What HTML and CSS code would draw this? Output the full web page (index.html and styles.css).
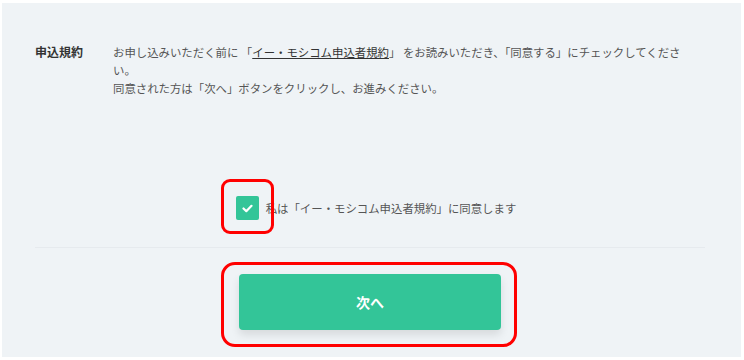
FILE: index.html
```html
<!DOCTYPE html>
<html lang="ja">
<head>
    <meta charset="UTF-8">
    <meta name="viewport" content="width=device-width, initial-scale=1.0">
    <title>申込規約</title>
    <link rel="stylesheet" href="styles.css">
</head>
<body>

    <div class="panel">
        <!-- 規約の説明 -->
        <div class="terms">
            <div class="terms-label">申込規約</div>
            <div class="terms-text">
                <p>お申し込みいただく前に 「<a href="#">イー・モシコム申込者規約</a>」 をお読みいただき、「同意する」にチェックしてください。</p>
                <p>同意された方は「次へ」ボタンをクリックし、お進みください。</p>
            </div>
        </div>

        <!-- 同意チェック -->
        <div class="agree">
            <label class="agree-label">
                <span class="check">
                    <svg width="11" height="9" viewBox="0 0 11 9">
                        <polyline points="1.5,4.5 4.3,7.2 9.5,1.8" fill="none" stroke="#fff" stroke-width="2.2" stroke-linecap="round" stroke-linejoin="round"/>
                    </svg>
                    <span class="mark mark-check"></span>
                </span>
                <span class="agree-text">私は「イー・モシコム申込者規約」に同意します</span>
            </label>
        </div>

        <footer>
            <button class="next-btn">次へ<span class="mark mark-btn"></span></button>
        </footer>
    </div>

</body>
</html>
```

FILE: styles.css
```css
/* スタイル設定 */
body {
    margin: 0;
    padding: 0;
    background-color: #fff;
    font-family: "Noto Sans CJK JP", "Noto Sans", sans-serif;
    color: #555;
}
.panel {
    margin: 3px 3px 0 2px;
    height: 354px;
    padding: 40px 36px 0 33px;
    box-sizing: border-box;
    background-color: #eff3f6;
}
.terms {
    display: flex;
}
.terms-label {
    width: 78px;
    flex-shrink: 0;
    font-size: 12px;
    line-height: 18px;
    font-weight: bold;
    color: #333;
}
.terms-text {
    font-size: 11.4px;
    line-height: 18px;
    padding-right: 10px;
}
.terms-text p {
    margin: 0;
}
.terms-text a {
    color: #333;
    text-decoration: underline;
}
.agree {
    margin-top: 99px;
    padding-bottom: 27px;
    border-bottom: 1px solid #e6eaee;
    display: flex;
    justify-content: center;
    padding-left: 12px;
}
.agree-label {
    display: flex;
    align-items: center;
    cursor: pointer;
}
.check {
    position: relative;
    width: 23px;
    height: 24px;
    border-radius: 2px;
    background-color: #33c598;
    display: flex;
    align-items: center;
    justify-content: center;
}
.agree-text {
    margin-left: 7px;
    font-size: 11.4px;
    color: #555;
}
footer {
    text-align: center;
    margin-top: 26px;
}
.next-btn {
    position: relative;
    width: 262px;
    height: 56px;
    font-family: "Noto Sans CJK JP", sans-serif;
    font-size: 14px;
    font-weight: bold;
    color: #fff;
    background-color: #33c598;
    border: none;
    border-radius: 4px;
    box-shadow: 0 5px 8px rgba(0, 0, 0, 0.1);
    cursor: pointer;
}
/* 赤い注釈枠 */
.mark {
    position: absolute;
    border: 3px solid #ff0000;
    pointer-events: none;
}
.mark-check {
    top: -17px;
    left: -15px;
    right: -15px;
    bottom: -14px;
    border-radius: 9px;
}
.mark-btn {
    top: -12px;
    left: -18px;
    right: -16px;
    bottom: -17px;
    border-radius: 14px;
}
```
